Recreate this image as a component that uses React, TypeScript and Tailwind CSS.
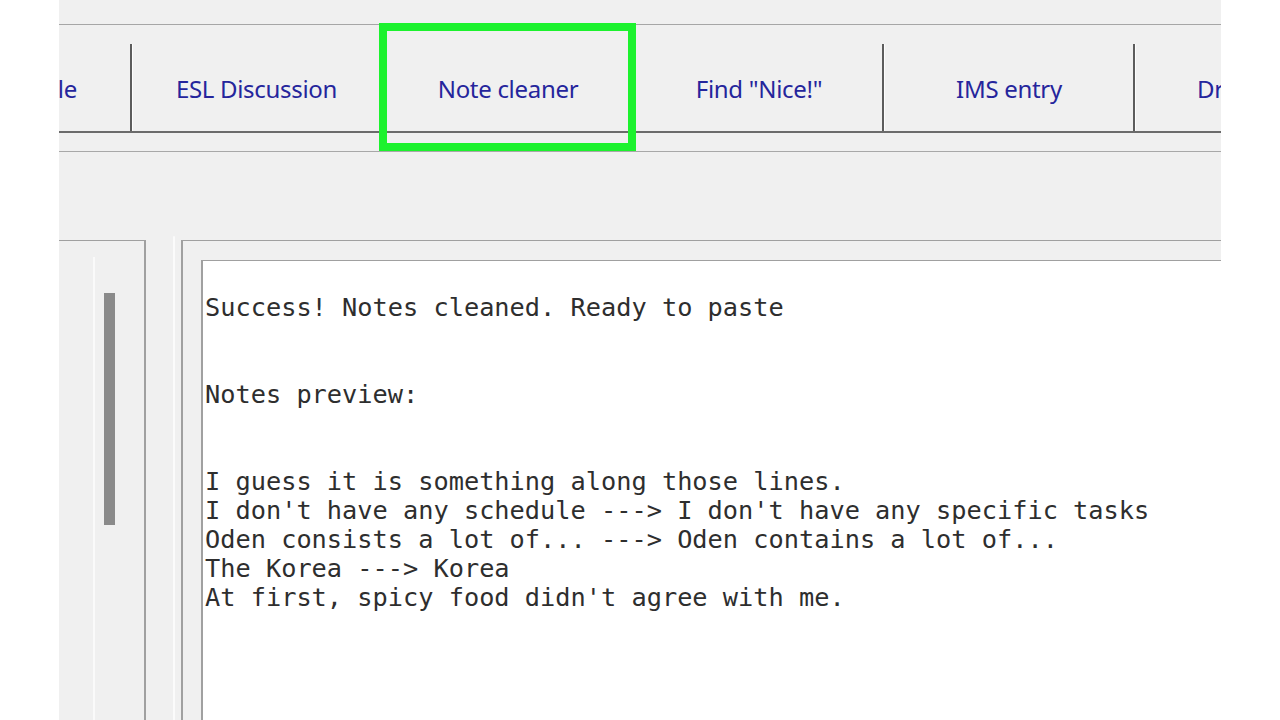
import React from 'react';

const tabs = [
  { label: 'ESL Discussion', width: 'w-[250px]', sep: 'dark' },
  { label: 'Note cleaner', width: 'w-[253px]', sep: 'dark' },
  { label: 'Find "Nice!"', width: 'w-[249px]', sep: 'light' },
  { label: 'IMS entry', width: 'w-[251px]', sep: 'dark' },
];

const notes = `Success! Notes cleaned. Ready to paste


Notes preview:


I guess it is something along those lines.
I don't have any schedule ---> I don't have any specific tasks
Oden consists a lot of... ---> Oden contains a lot of...
The Korea ---> Korea
At first, spicy food didn't agree with me.`;

const Separator: React.FC<{ kind: string }> = ({ kind }) => (
  <div className="flex h-full shrink-0">
    <div className={kind === 'dark' ? 'w-[2px] h-full bg-[#5c5c5c]' : 'w-[2px] h-full bg-[#f0f0f0]'} />
    <div className="w-px h-full bg-[#fdfdfd]" />
  </div>
);

const App: React.FC = () => {
  return (
    <div className="w-[1280px] h-[720px] bg-white flex overflow-hidden">
      <div className="w-[59px] shrink-0" />
      <div className="relative w-[1162px] shrink-0 bg-[#f0f0f0] flex flex-col overflow-hidden">
        <div className="h-[24px] shrink-0" />
        <div className="h-px bg-[#a6a6a6] shrink-0" />
        <div className="h-[19px] shrink-0" />

        {/* tab strip */}
        <div
          className="h-[89px] shrink-0 flex border-b-2 border-[#6b6b6b] text-[24px] tracking-[-0.3px] text-[#25259c] whitespace-nowrap"
          style={{ fontFamily: '"Noto Sans", "Open Sans", sans-serif' }}
        >
          <div className="w-[71px] shrink-0 flex items-center justify-end pr-[53px] pt-[3px] overflow-hidden">
            Schedule
          </div>
          {tabs.map((t) => (
            <div key={t.label} className={`${t.width} shrink-0 flex h-full`}>
              <Separator kind={t.sep} />
              <div className="flex-1 flex items-center justify-center pt-[3px]">{t.label}</div>
            </div>
          ))}
          <div className="flex-1 flex h-full min-w-0">
            <Separator kind="dark" />
            <div className="flex-1 flex items-center pl-[61px] pt-[3px] overflow-hidden">Drive sync</div>
          </div>
        </div>

        <div className="h-[18px] shrink-0" />
        <div className="h-px bg-[#a8a8a8] shrink-0" />
        <div className="h-[88px] shrink-0" />

        {/* lower panels */}
        <div className="flex-1 flex min-h-0">
          <div className="w-[87px] shrink-0 border-t border-r-2 border-[#a0a0a0] flex">
            <div className="w-[34px] shrink-0" />
            <div className="w-[2px] shrink-0 bg-[#fafafa] mt-[16px]" />
            <div className="w-[9px] shrink-0" />
            <div className="w-[11px] shrink-0 bg-[#8a8a8a] mt-[52px] h-[232px]" />
          </div>
          <div className="w-[35px] shrink-0 flex">
            <div className="w-[27px] shrink-0" />
            <div className="w-[2px] shrink-0 bg-[#fbfbfb] mt-[-4px] rounded-t-full" />
          </div>
          <div className="flex-1 border-l-2 border-t border-[#a0a0a0] pl-[18px] pt-[19px]">
            <div
              className="h-full bg-white border-l-2 border-t border-[#a0a0a0] pl-[2px] pt-[32px] text-[25.3px] leading-[29px] text-[#2e2e2e] whitespace-pre"
              style={{ fontFamily: '"DejaVu Sans Mono", "Liberation Mono", monospace' }}
            >
              {notes}
            </div>
          </div>
        </div>

        {/* highlight box */}
        <div className="absolute left-[320px] top-[23px] w-[257px] h-[128px] border-[8px] border-[#1cf22e]" />
      </div>
      <div className="w-[59px] shrink-0" />
    </div>
  );
};

export default App;
